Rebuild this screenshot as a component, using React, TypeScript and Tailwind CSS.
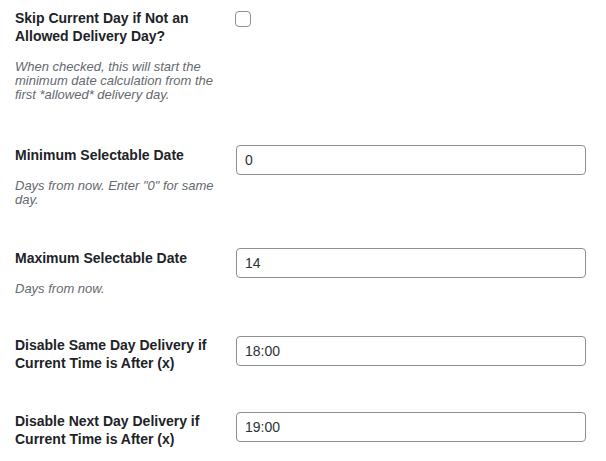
import React from "react";

const font = { fontFamily: '"Liberation Sans", Arial, sans-serif' };

function Label({ children }: { children: React.ReactNode }) {
  return (
    <div className="text-[14px] font-bold leading-[18px] text-[#1d2327]">{children}</div>
  );
}

function Desc({ children }: { children: React.ReactNode }) {
  return (
    <p className="mt-[15px] text-[13px] italic leading-[14px] text-[#646970]">{children}</p>
  );
}

function TextInput({ value }: { value: string }) {
  return (
    <input
      type="text"
      defaultValue={value}
      className="ml-[1px] box-border h-[30px] w-[350px] rounded-[4px] border border-[#8c8f94] bg-white px-[8px] text-[14px] text-[#2c3338] outline-none"
      style={font}
    />
  );
}

export default function App() {
  return (
    <div className="min-h-[461px] w-[606px] bg-white pl-[15px] pt-[9px]" style={font}>
      <div className="flex flex-col">
        <div className="flex">
          <div className="w-[200px] shrink-0">
            <Label>Skip Current Day if Not an Allowed Delivery Day?</Label>
            <Desc>
              When checked, this will start the minimum date calculation from the first *allowed* delivery day.
            </Desc>
          </div>
          <div className="ml-[20px] pt-[2px]">
            <div className="box-border h-[16px] w-[16px] rounded-[4px] border border-[#8c8f94] bg-white" />
          </div>
        </div>

        <div className="mt-[43px] flex">
          <div className="w-[200px] shrink-0">
            <div className="pt-[1px]">
              <Label>Minimum Selectable Date</Label>
            </div>
            <Desc>Days from now. Enter "0" for same day.</Desc>
          </div>
          <div className="ml-[20px]">
            <TextInput value="0" />
          </div>
        </div>

        <div className="mt-[41px] flex">
          <div className="w-[200px] shrink-0">
            <div className="pt-[1px]">
              <Label>Maximum Selectable Date</Label>
            </div>
            <Desc>Days from now.</Desc>
          </div>
          <div className="ml-[20px]">
            <TextInput value="14" />
          </div>
        </div>

        <div className="mt-[40px] flex">
          <div className="w-[200px] shrink-0">
            <Label>Disable Same Day Delivery if Current Time is After (x)</Label>
          </div>
          <div className="ml-[20px]">
            <TextInput value="18:00" />
          </div>
        </div>

        <div className="mt-[40px] flex">
          <div className="w-[200px] shrink-0">
            <Label>Disable Next Day Delivery if Current Time is After (x)</Label>
          </div>
          <div className="ml-[20px]">
            <TextInput value="19:00" />
          </div>
        </div>
      </div>
    </div>
  );
}
